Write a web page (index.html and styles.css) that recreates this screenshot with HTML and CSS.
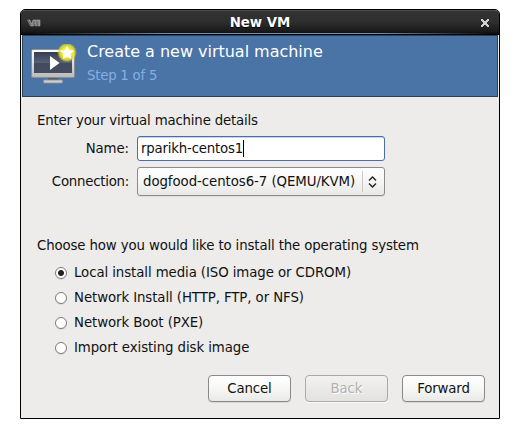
FILE: index.html
```html
<!DOCTYPE html>
<html lang="en">
<head>
<meta charset="utf-8">
<title>New VM</title>
<link rel="stylesheet" href="styles.css">
</head>
<body>
<main class="window">
  <div class="titlebar">
    <svg class="app-icon" width="14" height="8" viewBox="0 0 14 8"><path d="M.5 1h2.500l1.500 4L6 1h7v6h-1.500V3.500h-1V7H8.500V3.500L7 7H3.500z" fill="#888" stroke="#b0b0b0" stroke-width=".5"/><path d="M1 .5l3 6M7 2v5M10 2v5" stroke="#444" stroke-width=".6"/></svg>
    <span class="title">New VM</span>
    <svg class="close" width="8" height="8" viewBox="0 0 8 8"><path d="M0 0h2v1h1v1h2V1h1V0h2v2H7v1H6v2h1v1h1v2H6V7H5V6H3v1H2v1H0V6h1V5h1V3H1V2H0z" fill="#d0d0d0"/></svg>
  </div>
  <header class="banner">
    <svg class="vm-icon" width="48" height="44" viewBox="0 0 48 44">
      <defs>
        <linearGradient id="frame" x1="0" y1="0" x2="0" y2="1"><stop offset="0" stop-color="#fff"/><stop offset="1" stop-color="#b9b9b9"/></linearGradient>
        <linearGradient id="screen" x1="0" y1="0" x2="0" y2="1"><stop offset="0" stop-color="#343d52"/><stop offset=".5" stop-color="#566075"/><stop offset=".55" stop-color="#424a5e"/><stop offset="1" stop-color="#454d61"/></linearGradient>
        <radialGradient id="glow"><stop offset=".5" stop-color="#f2ec35"/><stop offset=".76" stop-color="#e5df2c" stop-opacity=".85"/><stop offset="1" stop-color="#e0d820" stop-opacity="0"/></radialGradient>
      </defs>
      <path d="M17 34h10v4H17z" fill="#555b60"/>
      <rect x="12.500" y="36" width="19" height="3" rx="1" fill="#ccc" stroke="#969696" stroke-width=".8"/>
      <rect x=".5" y="5.500" width="43" height="28" rx="1.500" fill="url(#frame)" stroke="#8b8f94"/>
      <rect x="3" y="8" width="38" height="21" fill="url(#screen)"/>
      <path d="M19 12v14l9.500-7z" fill="#fff"/>
      <circle cx="36" cy="8.500" r="10" fill="url(#glow)"/>
      <path d="M36 2.500l1.900 3.900 4.400.6-3.200 3 .8 4.400-3.900-2.100-3.900 2.100.8-4.400-3.200-3 4.400-.6z" fill="#fff" stroke="#fff" stroke-width=".8" stroke-linejoin="round"/>
    </svg>
    <div class="headings">
      <h1>Create a new virtual machine</h1>
      <p>Step 1 of 5</p>
    </div>
  </header>
  <form class="content">
    <p class="section">Enter your virtual machine details</p>
    <div class="fields">
      <span class="label name">Name:</span>
      <div class="entry"><span class="value">rparikh-centos1</span><i class="caret"></i></div>
      <span class="label conn">Connection:</span>
      <div class="combo"><span class="combo-text">dogfood-centos6-7 (QEMU/KVM)</span>
        <svg class="arrows" width="9" height="12" viewBox="0 0 9 12"><path d="M1 4.500L4.500 1 8 4.500M1 7.500L4.500 11 8 7.500" fill="none" stroke="#222" stroke-width="1.400"/></svg>
      </div>
    </div>
    <p class="section choose">Choose how you would like to install the operating system</p>
    <div class="options">
      <div class="option"><i class="radio checked"></i><span>Local install media (ISO image or CDROM)</span></div>
      <div class="option"><i class="radio"></i><span>Network Install (HTTP, FTP, or NFS)</span></div>
      <div class="option"><i class="radio"></i><span>Network Boot (PXE)</span></div>
      <div class="option"><i class="radio"></i><span>Import existing disk image</span></div>
    </div>
    <div class="actions">
      <div class="button">Cancel</div>
      <div class="button disabled">Back</div>
      <div class="button">Forward</div>
    </div>
  </form>
</main>
</body>
</html>
```
FILE: styles.css
```css
* { box-sizing: border-box; }
body {
  margin: 0;
  padding: 9px 0 0 20px;
  background: #fff;
  color: #111;
  font: 13.33px/16px "DejaVu Sans", sans-serif;
}
h1, p { margin: 0; font-weight: normal; }
svg { display: block; }
.window {
  width: 480px;
  height: 410px;
  border: 1px solid #000;
  border-radius: 5px 5px 0 0;
  background: #edeceb;
  overflow: hidden;
}
.titlebar {
  height: 25px;
  display: grid;
  grid-template-columns: 30px 1fr 30px;
  align-items: center;
  background:
    linear-gradient(90deg, transparent 2%, #6d8fb5 30%, #6d8fb5 75%, transparent 98%) 0 23px / 100% 1px no-repeat,
    linear-gradient(#656565 0, #333 1px, #2e2e2e 12px, #181818 22px, #000 25px);
}
.app-icon { margin-left: 6px; }
.title {
  text-align: center;
  color: #fff;
  font-weight: bold;
  text-shadow: 0 1px 1px #000;
}
.close { margin: 1px 0 0 12px; }
.banner {
  height: 62px;
  margin: 0 1px;
  padding: 8px 0 0 8px;
  display: flex;
  border: 1px solid #2c4057;
  background: #4a73a6;
}
.headings { padding-left: 8px; }
h1 { color: #fff; font-size: 16px; line-height: 16px; letter-spacing: -.02px; }
.headings p { margin-top: 8px; color: #82b0e4; letter-spacing: -.25px; }
.content { padding: 16px 14px 0 16px; }
.section { letter-spacing: -.18px; }
.fields {
  margin-top: 7px;
  display: grid;
  grid-template-columns: 92px 248px;
  grid-template-rows: 25px 29px;
  gap: 6px 8px;
  align-items: center;
}
.label { text-align: right; letter-spacing: -.25px; }
.name { letter-spacing: -.1px; }
.entry, .combo {
  height: 100%;
  display: flex;
  align-items: center;
  border-radius: 3px;
}
.entry {
  padding-left: 3px;
  border: 1px solid #4a6ea5;
  background: #fff;
  box-shadow: inset 0 1px 0 #c5d5ec;
}
.value { letter-spacing: -.2px; }
.caret { width: 1px; height: 17px; background: #000; }
.combo {
  padding: 0 7px 0 5px;
  justify-content: space-between;
  border: 1px solid #8b8b87;
  background:
    linear-gradient(#c8c8c4, #c8c8c4) 224px 3px / 1px 21px no-repeat,
    linear-gradient(#fff, #f6f6f5 50%, #e8e8e6);
  box-shadow: 0 1px 0 #dedddb;
}
.combo-text { white-space: nowrap; letter-spacing: -.07px; }
.choose { margin-top: 42px; letter-spacing: -.135px; }
.options { margin: 6px 0 0 18px; }
.option {
  height: 25px;
  display: flex;
  align-items: center;
  gap: 7px;
  white-space: nowrap;
  letter-spacing: -.09px;
}
.radio {
  width: 12px;
  height: 12px;
  border: 1px solid #7b7b79;
  border-radius: 50%;
  background: #fff;
  box-shadow: 0 1px 0 #dadad8;
}
.checked { background: radial-gradient(circle at 50% 50%, #222 2.500px, #fff 3.500px); }
.actions { margin-top: 15px; display: flex; justify-content: flex-end; gap: 14px; }
.button {
  width: 83px;
  height: 27px;
  line-height: 25px;
  text-align: center;
  letter-spacing: -.15px;
  border: 1px solid #898986;
  border-radius: 4px;
  background: linear-gradient(#fff, #f7f7f6 50%, #e9e9e7);
  box-shadow: 0 1px 0 #d8d8d6;
}
.disabled {
  color: #b1b1ad;
  border-color: #aaa9a6;
  background: linear-gradient(#f1f1ef, #e3e2e0);
  box-shadow: 0 1px 0 #fafafa;
  text-shadow: 1px 1px 0 #fff;
}
```
